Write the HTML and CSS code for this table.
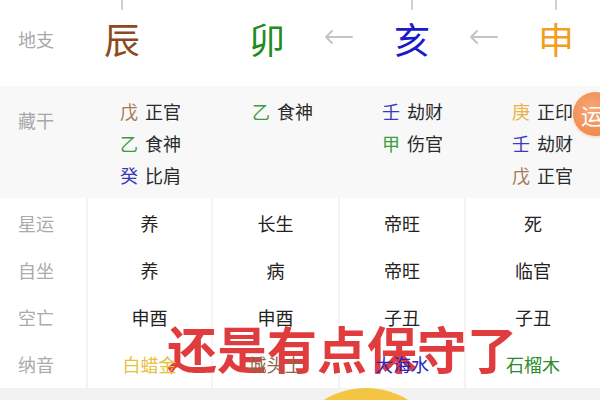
FILE: index.html
```html
<!DOCTYPE html>
<html lang="zh">
<head>
<meta charset="utf-8">
<link rel="stylesheet" href="styles.css">
</head>
<body>
<div class="page">
  <div class="branches">
    <div class="label">地支</div>
    <div class="bcell"><span class="tick"></span><span class="big c-chen">辰</span></div>
    <div class="bcell"></div>
    <div class="bcell"><span class="tick none"></span><span class="big c-mao">卯</span></div>
    <div class="bcell"><span class="tick none"></span><svg class="arrow" width="30" height="16" viewBox="0 0 30 16"><path d="M28 8H2M8 2L2 8l6 6" fill="none" stroke="#c4c4c4" stroke-width="2" stroke-linecap="round" stroke-linejoin="round"/></svg></div>
    <div class="bcell"><span class="tick"></span><span class="big c-hai">亥</span></div>
    <div class="bcell"><span class="tick none"></span><svg class="arrow" width="30" height="16" viewBox="0 0 30 16"><path d="M28 8H2M8 2L2 8l6 6" fill="none" stroke="#c4c4c4" stroke-width="2" stroke-linecap="round" stroke-linejoin="round"/></svg></div>
    <div class="bcell"><span class="tick"></span><span class="big c-shen">申</span></div>
  </div>

  <div class="hidden">
    <div class="hlabel">藏干</div>
    <div class="hcol">
      <div class="hrow"><span class="s-wu">戊</span><span class="god">正官</span></div>
      <div class="hrow"><span class="s-yi">乙</span><span class="god">食神</span></div>
      <div class="hrow"><span class="s-gui">癸</span><span class="god">比肩</span></div>
    </div>
    <div class="hcol">
      <div class="hrow"><span class="s-yi">乙</span><span class="god">食神</span></div>
    </div>
    <div class="hcol">
      <div class="hrow"><span class="s-ren">壬</span><span class="god">劫财</span></div>
      <div class="hrow"><span class="s-jia">甲</span><span class="god">伤官</span></div>
    </div>
    <div class="hcol">
      <div class="hrow"><span class="s-geng">庚</span><span class="god">正印</span></div>
      <div class="hrow"><span class="s-ren">壬</span><span class="god">劫财</span></div>
      <div class="hrow"><span class="s-wu">戊</span><span class="god">正官</span></div>
    </div>
    <div class="badge">运</div>
  </div>

  <div class="table">
    <div class="tcol labels">
      <div class="tcell">星运</div>
      <div class="tcell">自坐</div>
      <div class="tcell">空亡</div>
      <div class="tcell">纳音</div>
    </div>
    <div class="tcol">
      <div class="tcell">养</div>
      <div class="tcell">养</div>
      <div class="tcell">申酉</div>
      <div class="tcell n-gold">白蜡金</div>
    </div>
    <div class="tcol">
      <div class="tcell">长生</div>
      <div class="tcell">病</div>
      <div class="tcell">申酉</div>
      <div class="tcell n-earth">城头土</div>
    </div>
    <div class="tcol">
      <div class="tcell">帝旺</div>
      <div class="tcell">帝旺</div>
      <div class="tcell">子丑</div>
      <div class="tcell n-water">大海水</div>
    </div>
    <div class="tcol">
      <div class="tcell">死</div>
      <div class="tcell">临官</div>
      <div class="tcell">子丑</div>
      <div class="tcell n-wood">石榴木</div>
    </div>
  </div>

  <div class="footer"><div class="sun"></div></div>

  <div class="caption">还是有点保守了</div>
</div>
</body>
</html>
```

FILE: styles.css
```css
* { box-sizing: border-box; }
html, body { margin: 0; padding: 0; background: #fff; }
body {
  font-family: "Noto Sans CJK SC", "Noto Sans", sans-serif;
  width: 600px;
  height: 400px;
  overflow: hidden;
}
.page { position: relative; width: 600px; height: 400px; overflow: hidden; }

/* top branches row */
.branches {
  display: grid;
  grid-template-columns: 88px 68px 76px 70px 74px 72px 72px 72px;
  height: 86px;
  background: #fff;
}
.label {
  padding-left: 18px;
  padding-top: 25px;
  font-size: 18px;
  line-height: 28px;
  color: #a8a8a8;
}
.bcell {
  display: flex;
  flex-direction: column;
  align-items: center;
}
.tick { width: 2px; height: 10px; background: #cfcfcf; }
.tick.none { background: transparent; }
.big {
  margin-top: 6px;
  font-size: 36px;
  line-height: 44px;
}
.arrow { margin-top: 19px; }
.c-chen { color: #8c4a1e; }
.c-mao { color: #1e8c1e; }
.c-hai { color: #1a1ac8; }
.c-shen { color: #f29e1e; }

/* hidden stems */
.hidden {
  position: relative;
  display: grid;
  grid-template-columns: 120px 132px 130px 130px 1fr;
  height: 112px;
  background: #f8f8f8;
  padding-top: 9px;
}
.hlabel {
  padding-left: 18px;
  padding-top: 9px;
  font-size: 18px;
  line-height: 32px;
  color: #a8a8a8;
}
.hrow {
  display: flex;
  gap: 7px;
  font-size: 18px;
  line-height: 32px;
}
.god { color: #2a2a2a; }
.s-wu { color: #a87a52; }
.s-yi { color: #3f9a3f; }
.s-gui { color: #3a3ab4; }
.s-ren { color: #3a3ac4; }
.s-jia { color: #3a9e3a; }
.s-geng { color: #e9b445; }

.badge {
  position: absolute;
  left: 573px;
  top: 6px;
  width: 44px;
  height: 44px;
  border-radius: 50%;
  background: radial-gradient(circle at 40% 40%, #f7a877 0%, #f08a4e 70%, #ec7c40 100%);
  color: #fff;
  font-size: 22px;
  line-height: 44px;
  padding-left: 8px;
  box-shadow: 0 1px 3px rgba(240, 130, 70, 0.35);
}

/* lower table */
.table {
  display: grid;
  grid-template-columns: 86px 123px 125px 124px 1fr;
  column-gap: 2px;
  background: #f3f3f3;
  height: 190px;
}
.tcol {
  background: #fff;
  padding-top: 2px;
}
.tcell {
  position: relative;
  z-index: 2;
  height: 47px;
  line-height: 47px;
  text-align: center;
  font-size: 18px;
  color: #222;
}
.labels .tcell {
  text-align: left;
  padding-left: 18px;
  color: #ababab;
}
.n-gold { color: #e8c03c; }
.n-earth { color: #8a6a48; }
.n-water { color: #2424c4; }
.n-wood { color: #2c8c2c; }

/* footer */
.footer {
  position: relative;
  height: 12px;
  background: #f2f2f2;
  overflow: hidden;
}
.sun {
  position: absolute;
  left: 286px;
  top: 0;
  width: 160px;
  height: 160px;
  border-radius: 50%;
  background: #f4c542;
}

/* caption overlay */
.caption {
  position: absolute;
  z-index: 1;
  left: 167px;
  top: 317px;
  font-size: 50px;
  line-height: 60px;
  font-weight: 700;
  color: #e03c3e;
  white-space: nowrap;
  text-shadow:
    1px 0 0 #fff, -1px 0 0 #fff, 0 1px 0 #fff, 0 -1px 0 #fff,
    1px 1px 0 #fff, -1px 1px 0 #fff, 1px -1px 0 #fff, -1px -1px 0 #fff;
}
```
